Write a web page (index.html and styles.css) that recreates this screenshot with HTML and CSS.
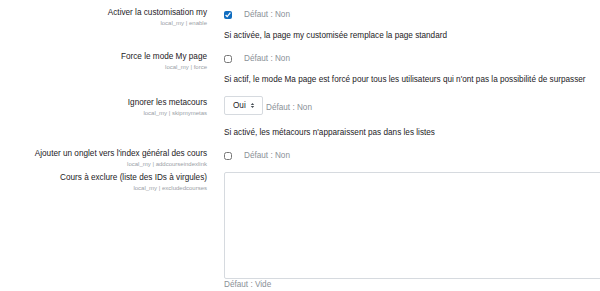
FILE: index.html
```html
<!DOCTYPE html>
<html lang="fr">
<head>
    <meta charset="UTF-8">
    <meta name="viewport" content="width=device-width, initial-scale=1.0">
    <title>Réglages local_my</title>
    <link rel="stylesheet" href="styles.css">
</head>
<body>
    <div class="settings">
        <div class="setting">
            <div class="setting-label">
                <div class="label-text">Activer la customisation my</div>
                <div class="label-key">local_my | enable</div>
            </div>
            <div class="setting-control">
                <div class="control-line">
                    <input type="checkbox" class="check" checked>
                    <span class="default">Défaut : Non</span>
                </div>
                <div class="desc">Si activée, la page my customisée remplace la page standard</div>
            </div>
        </div>

        <div class="setting">
            <div class="setting-label">
                <div class="label-text">Force le mode My page</div>
                <div class="label-key">local_my | force</div>
            </div>
            <div class="setting-control">
                <div class="control-line">
                    <input type="checkbox" class="check">
                    <span class="default">Défaut : Non</span>
                </div>
                <div class="desc">Si actif, le mode Ma page est forcé pour tous les utilisateurs qui n'ont pas la possibilité de surpasser</div>
            </div>
        </div>

        <div class="setting setting-select">
            <div class="setting-label">
                <div class="label-text">Ignorer les metacours</div>
                <div class="label-key">local_my | skipmymetas</div>
            </div>
            <div class="setting-control">
                <div class="control-line">
                    <div class="select">
                        <span>Oui</span>
                        <svg width="5" height="7" viewBox="0 0 5 7">
                            <path d="M0.8 3 L2.5 1 L4.2 3 Z M0.8 4 L2.5 6 L4.2 4 Z" fill="#495057"/>
                        </svg>
                    </div>
                    <span class="default default-near">Défaut : Non</span>
                </div>
                <div class="desc">Si activé, les métacours n'apparaissent pas dans les listes</div>
            </div>
        </div>

        <div class="setting">
            <div class="setting-label">
                <div class="label-text">Ajouter un onglet vers l'index général des cours</div>
                <div class="label-key">local_my | addcourseindexlink</div>
            </div>
            <div class="setting-control">
                <div class="control-line">
                    <input type="checkbox" class="check">
                    <span class="default">Défaut : Non</span>
                </div>
            </div>
        </div>

        <div class="setting">
            <div class="setting-label">
                <div class="label-text">Cours à exclure (liste des IDs à virgules)</div>
                <div class="label-key">local_my | excludedcourses</div>
            </div>
            <div class="setting-control">
                <textarea class="textarea"></textarea>
                <div class="default">Défaut : Vide</div>
            </div>
        </div>
    </div>
</body>
</html>
```

FILE: styles.css
```css
html, body {
    overflow: hidden;
}

body {
    margin: 0;
    background: #fff;
    font-family: "Liberation Sans", Arial, sans-serif;
    color: #1d2125;
}

.settings {
    padding-top: 7px;
}

.setting {
    display: grid;
    grid-template-columns: 207px 1fr;
    column-gap: 17px;
    margin-bottom: 3px;
}

.setting-label {
    text-align: right;
}

.label-text {
    font-size: 8.2px;
    line-height: 12px;
    color: #1d2125;
}

.label-key {
    font-size: 6px;
    line-height: 9px;
    color: #9aa0a6;
}

.setting-select .setting-label {
    padding-top: 2px;
}

.control-line {
    display: flex;
    align-items: center;
    min-height: 16px;
}

.check {
    width: 8px;
    height: 8px;
    margin: 0 12px 0 0;
    accent-color: #0f6cbf;
}

.default {
    font-size: 8.2px;
    line-height: 12px;
    color: #8a9097;
}

.default-near {
    margin-left: 3px;
}

.desc {
    margin: 7px 0 6px;
    font-size: 8.2px;
    line-height: 12px;
    color: #1d2125;
}

.select {
    box-sizing: border-box;
    width: 39px;
    height: 19px;
    margin: 1px 0 5px;
    padding: 0 7px 0 8px;
    border: 1px solid #d6dadf;
    border-radius: 2px;
    display: flex;
    align-items: center;
    justify-content: space-between;
    font-size: 8.2px;
    color: #1d2125;
}

.textarea {
    display: block;
    box-sizing: border-box;
    width: 460px;
    height: 107px;
    margin: 0;
    border: 1px solid #d6dadf;
    border-radius: 2px;
    resize: none;
    background: #fff;
}
```
